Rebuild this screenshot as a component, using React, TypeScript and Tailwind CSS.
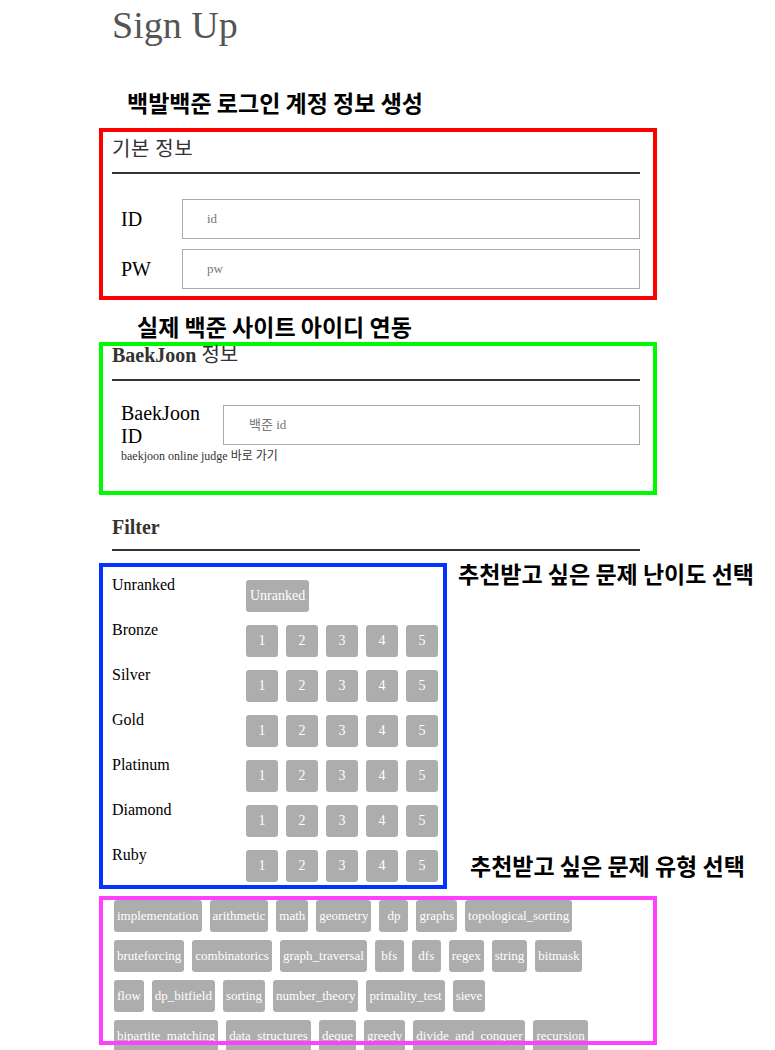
import React from "react";

const tiers = ["Bronze", "Silver", "Gold", "Platinum", "Diamond", "Ruby"];
const tags = [
  "implementation", "arithmetic", "math", "geometry", "dp", "graphs", "topological_sorting",
  "bruteforcing", "combinatorics", "graph_traversal", "bfs", "dfs", "regex", "string", "bitmask",
  "flow", "dp_bitfield", "sorting", "number_theory", "primality_test", "sieve",
  "bipartite_matching", "data_structures", "deque", "greedy", "divide_and_conquer", "recursion",
];

function Note({ children, className = "" }: { children: React.ReactNode; className?: string }) {
  return (
    <div className={"font-['Noto_Sans_CJK_KR',sans-serif] font-bold text-[23px] leading-[30px] text-black whitespace-nowrap " + className}>
      {children}
    </div>
  );
}

function LevelButton({ label }: { label: string }) {
  return (
    <button className="h-[32px] min-w-[32px] px-[4px] rounded-[3px] bg-[#adadad] text-white text-[14px] leading-[32px] font-['Liberation_Serif',serif]">
      {label}
    </button>
  );
}

export default function App() {
  return (
    <div className="w-[775px] min-h-screen bg-white pl-[99px] pb-[40px] text-black font-['Liberation_Serif','Noto_Sans_CJK_KR',serif]">
      <h1 className="pl-[13px] pt-[2px] h-[48px] text-[38px] leading-[46px] text-[#555] font-normal">Sign Up</h1>

      <Note className="ml-[28px] mt-[39px]">백발백준 로그인 계정 정보 생성</Note>

      {/* 기본 정보 */}
      <section className="mt-[11px] w-[558px] border-4 border-[#ff0000] pl-[9px] pr-[13px] pb-[7px]">
        <div className="pt-[3px] pb-[9px] border-b-2 border-[#333] text-[20px] leading-[28px] text-[#333] tracking-[0.5px]">
          기본 정보
        </div>
        <div className="mt-[25px] flex items-center">
          <div className="w-[70px] pl-[9px] text-[20px]">ID</div>
          <input
            placeholder="id"
            className="flex-1 h-[40px] border border-[#aaa] pl-[24px] text-[13px] outline-none placeholder:text-[#777] font-['Liberation_Serif','Noto_Sans_CJK_KR',serif]"
          />
        </div>
        <div className="mt-[10px] flex items-center">
          <div className="w-[70px] pl-[9px] text-[20px]">PW</div>
          <input
            placeholder="pw"
            className="flex-1 h-[40px] border border-[#aaa] pl-[24px] text-[13px] outline-none placeholder:text-[#777] font-['Liberation_Serif','Noto_Sans_CJK_KR',serif]"
          />
        </div>
      </section>

      <Note className="ml-[38px] mt-[11px]">실제 백준 사이트 아이디 연동</Note>

      {/* BaekJoon 정보 */}
      <section className="mt-[1px] w-[558px] border-4 border-[#00f900] pl-[9px] pr-[13px] pb-[28px]">
        <div className="pb-[15px] border-b-2 border-[#333] text-[20px] leading-[18px] text-[#333]">
          <span className="font-bold">BaekJoon</span> 정보
        </div>
        <div className="mt-[21px] flex items-center">
          <div className="w-[111px] shrink-0 pl-[9px] pr-[12px] text-[20px] leading-[23px]">BaekJoon ID</div>
          <input
            placeholder="백준 id"
            className="flex-1 h-[40px] border border-[#aaa] pl-[25px] text-[13px] outline-none placeholder:text-[#777] font-['Liberation_Serif','Noto_Sans_CJK_KR',serif]"
          />
        </div>
        <div className="mt-[1px] pl-[9px] text-[12px] leading-[14px] text-[#333]">baekjoon online judge 바로 가기</div>
      </section>

      {/* Filter */}
      <div className="mt-[20px] ml-[13px] w-[528px] pb-[10px] border-b-2 border-[#333] text-[20px] leading-[24px] font-bold text-[#333]">
        Filter
      </div>

      <div className="mt-[12px] flex items-start">
        <section className="w-[348px] border-4 border-[#0433ff] pl-[9px] pt-[9px] pb-[3px] flex flex-col gap-[9px]">
          <div className="flex items-start">
            <div className="w-[134px] text-[16px] leading-[18px]">Unranked</div>
            <div className="mt-[4px] flex gap-[8px]">
              <LevelButton label="Unranked" />
            </div>
          </div>
          {tiers.map((t) => (
            <div key={t} className="flex items-start">
              <div className="w-[134px] text-[16px] leading-[18px]">{t}</div>
              <div className="mt-[4px] flex gap-[8px]">
                {["1", "2", "3", "4", "5"].map((n) => (
                  <LevelButton key={n} label={n} />
                ))}
              </div>
            </div>
          ))}
        </section>
        <div className="-mt-[5px] flex flex-col">
          <Note className="ml-[11px]">추천받고 싶은 문제 난이도 선택</Note>
          <Note className="ml-[23px] mt-[262px]">추천받고 싶은 문제 유형 선택</Note>
        </div>
      </div>

      {/* Tags */}
      <section className="relative mt-[7px] pl-[15px] pt-[4px]">
        <div className="w-[478px] flex flex-wrap gap-[8px]">
          {tags.map((t) => (
            <button
              key={t}
              className="h-[32px] min-w-[29px] px-[3px] rounded-[3px] bg-[#adadad] text-white text-[13px] leading-[32px] font-['Liberation_Serif',serif]"
            >
              {t}
            </button>
          ))}
        </div>
        <div className="pointer-events-none absolute left-0 top-0 w-[558px] h-[149px] border-4 border-[#ff40ff]" />
      </section>
    </div>
  );
}
